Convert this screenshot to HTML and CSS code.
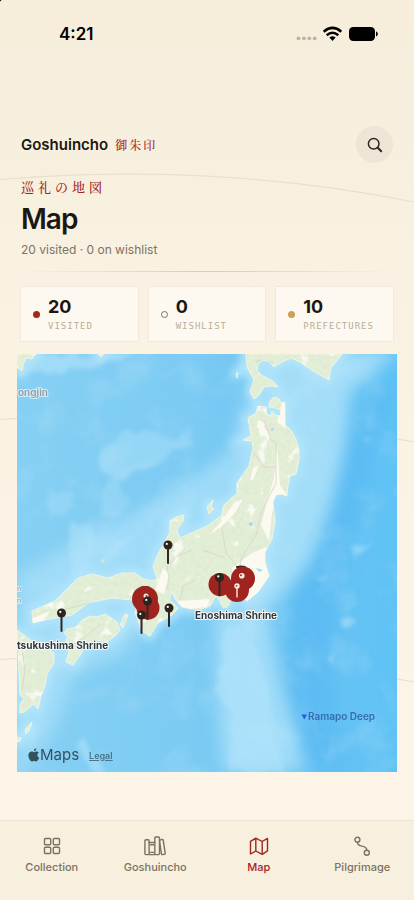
FILE: index.html
```html
<!DOCTYPE html>
<html lang="en">
<head>
<meta charset="utf-8">
<meta name="viewport" content="width=device-width, initial-scale=1">
<title>Goshuincho Map</title>
<link rel="stylesheet" href="styles.css">
</head>
<body>
<div class="app">
  <svg class="waves" viewBox="0 0 414 900" preserveAspectRatio="none" aria-hidden="true">
    <g fill="none" stroke="#e9dfca" stroke-width="1.2">
      <path id="wave" d="M0 179.500C130 169 270 173 414 202"/>
      <use href="#wave" y="240"/>
      <use href="#wave" y="480"/>
    </g>
    <path d="M0 0H1.500L0 1.500Z"/>
  </svg>

  <div class="status">
    <span class="time">4:21</span>
    <svg class="signals" width="82" height="16" viewBox="0 0 82 16" aria-hidden="true">
      <g fill="#bbb3a4"><circle cx="2.500" cy="12.300" r="1.900"/><circle cx="7.900" cy="12.300" r="1.900"/><circle cx="13.300" cy="12.300" r="1.900"/><circle cx="18.700" cy="12.300" r="1.900"/></g>
      <g fill="none" stroke="#000" stroke-width="2.500"><path d="M27.700 5.700Q36.500-1.900 45.300 5.700"/><path d="M30.700 9.200Q36.500 4.300 42.300 9.200"/></g>
      <path d="M33.400 11.500Q36.500 9 39.600 11.500L36.500 15Z"/>
      <rect x="53" y="1" width="26" height="14" rx="4.200"/><path d="M80 5.600c2.400.5 2.400 4.300 0 4.800Z"/>
    </svg>
  </div>

  <header class="topbar">
    <div class="brand"><span class="brand-name">Goshuincho</span><span class="brand-jp" lang="ja">御朱印</span></div>
    <button class="search" type="button" aria-label="Search">
      <svg width="16" height="16" viewBox="0 0 16 16" fill="none" stroke="#2f2720" stroke-linecap="round"><circle cx="6.700" cy="6.700" r="5.300" stroke-width="1.500"/><path d="M10.800 10.800L14.200 14.200" stroke-width="2"/></svg>
    </button>
  </header>

  <main>
    <section class="intro">
      <p class="eyebrow" lang="ja">巡礼の地図</p>
      <h1>Map</h1>
      <p class="summary">20 visited · 0 on wishlist</p>
      <div class="rule"></div>
      <ul class="stats">
        <li><i class="dot visited"></i><div><strong>20</strong><span>VISITED</span></div></li>
        <li><i class="dot wishlist"></i><div><strong>0</strong><span>WISHLIST</span></div></li>
        <li><i class="dot prefectures"></i><div><strong>10</strong><span>PREFECTURES</span></div></li>
      </ul>
    </section>

    <section class="map" aria-label="Shrine map">
      <svg class="map-art" viewBox="17 354 380 418" preserveAspectRatio="xMidYMid slice">
        <defs>
          <linearGradient id="sea" x1="0" x2="1" y1="0" y2="0"><stop offset="0" stop-color="#86d0f4"/><stop offset=".45" stop-color="#7ccbf3"/><stop offset=".75" stop-color="#6ac3f3"/><stop offset="1" stop-color="#5fc2f5"/></linearGradient>
          <filter id="b3" x="-30%" y="-30%" width="160%" height="160%"><feGaussianBlur stdDeviation="4"/></filter>
          <filter id="b8" x="-40%" y="-40%" width="180%" height="180%"><feGaussianBlur stdDeviation="8"/></filter>
          <filter id="rough" x="-20%" y="-20%" width="140%" height="140%"><feTurbulence type="fractalNoise" baseFrequency=".06" numOctaves="3" seed="4"/><feDisplacementMap in="SourceGraphic" scale="16" xChannelSelector="R" yChannelSelector="G"/><feGaussianBlur stdDeviation="2"/></filter>
          <filter id="current" x="0" y="0" width="100%" height="100%"><feTurbulence type="fractalNoise" baseFrequency=".025" numOctaves="4" seed="12"/><feColorMatrix values="0 0 0 0 .72  0 0 0 0 .9  0 0 0 0 .99  3 0 0 0 -1.500"/></filter>
          <filter id="patch" x="0" y="0" width="100%" height="100%"><feTurbulence type="fractalNoise" baseFrequency=".07" numOctaves="3" seed="9"/><feColorMatrix values="0 0 0 0 .99  0 0 0 0 .98  0 0 0 0 .94  8 0 0 0 -5.200"/></filter>
          <filter id="relief" x="0" y="0" width="100%" height="100%"><feTurbulence type="fractalNoise" baseFrequency=".22" numOctaves="2" seed="2"/><feColorMatrix values="0 0 0 0 .6  0 0 0 0 .72  0 0 0 0 .55  1.200 0 0 0 -.45"/></filter>
          <path id="land" d="M258 406l8 1 1 8 4 0 1-4 3 4 5 1 1-6-5-2-7-1 1-6 4-4 5 2 2 4 4-1 0 11 0 12 6 5 5 9 3 11 0 9-3 15-6 2-3 16 0 4-5-2-6 1-3 7 2 20-3 17-7 13 0 10 4 14-11 16-11 9-3-3 2-4-7-2-8 6-2 7-3 3-4-4-6-8-6 10-8 3-11 0-9-2-7-8-4-8-1 9 8 8-6 7-14 8-8 13-8-5-7-18 3-10-5-3-21-2-24 5-16 12-27 5-12 3-1-12 23-10 23-23 14-4 16 4 14-5 13 0 8 6 9 2 5-2-4-13 6-14 5-8 6-12 0-11 6-4 8-2-1 6-6 9 3 8 7-3 20-9 14-10 3-11 13-12 0-10 12-17 4-18-1-7-9-1 8-4-3-18 8-5z
            M246 354l1 13 7 13-4 12 4 7 5-4 5-8 7-1 7 1-4-5-7-4-6-3-4-5 1-6 5-4 5 1 6 6 8-5 9-4 9 4 11 8 18 10 2-12 11-14z
            M82 620l8-4 7 1 8-3 12 8 3 8-4 5-9 7-10-2-10 5-7 10-7 10-7-3 3-10-4-9 3-6-4-4 3-4 9-2z
            M17 630l8 6 8 6 9 2-2 7 7-2 7 4 0 10-7 11-2 12-4 10-3 13-4-5-10 8-4 1 0-9 4-5-4-4z
            M207 507l6-7-2 7 3 2-5 5zM120 625l5-11 3 1-5 13zM17 354h19l-4 5-6-1-3 7-1 6-5-4zM98 354h6l-3 3zM25 730l7-8-3 9-3 3zM17 737l4 1-1 3-3 1zM236 374l2-2-1 6z"/>
          <clipPath id="landclip"><use href="#land"/></clipPath>
          <g id="pin"><path d="M0 3V18" stroke="#2e2924" stroke-width="2" stroke-linecap="round"/><circle r="4.500" fill="#2c241d"/><circle cx="-1.200" cy="-1.100" r="1.100" fill="#fff"/></g>
          <g id="wpin"><path d="M0 2V11" stroke="#f1dfca" stroke-width="1.500" stroke-linecap="round"/><circle r="2.700" fill="#faf0e2"/><circle cx="-.4" cy="-.2" r=".9" fill="#a3261f"/></g>
        </defs>
        <rect x="17" y="354" width="380" height="418" fill="url(#sea)"/>
        <path d="M397 375L362 415 345 450 338 475 326 545 290 600 284 680 315 772H345L330 660 350 540 375 450Z" fill="#58baf3" filter="url(#b8)" opacity=".7"/>
        <g fill="#aadff8" filter="url(#rough)">
          <path d="M17 354H150Q80 372 17 376Z" opacity=".75"/>
          <path d="M102 445Q120 430 150 431 178 434 180 445 160 466 140 472 118 482 100 472Z" opacity=".5"/>
          <path d="M108 476L150 458 160 463 120 482 132 502 118 520 98 514Z" opacity=".4"/>
          <path d="M45 488L70 490 74 510 50 520Z" opacity=".4"/>
          <path d="M176 434L192 428 192 446 178 450Z" opacity=".4"/>
        </g>
        <g filter="url(#b8)" fill="#a8dff9">
          <path d="M240 350H400L350 392 344 450 332 500 310 560 275 605 235 620 255 520 285 480 275 390Z" opacity=".92"/>
          <path d="M17 575L80 540 155 502 190 480 230 450 245 390 260 420 230 520 170 590 130 640 125 655 75 675 55 730 17 780Z" opacity=".8"/>
          <path d="M214 610H267L281 680 305 772H222L216 700Z" opacity=".85"/>
        </g>
        <rect x="17" y="354" width="380" height="418" filter="url(#current)" opacity=".17"/>
        <g fill="#b2e3fa" filter="url(#rough)" opacity=".55">
          <path d="M225 625L252 615 265 670 285 772H226L231 715 217 690Z"/>
          <path d="M70 525l20-5 4 40-22 25zM105 550l30-14-4 10-30 15zM80 735l12 15 14 22H96L75 748z"/>
          <path d="M354 548l16-8-4 10-12 7zM342 620l7-4 3 5-6 4zM332 657l6-6-2 10-5 1zM315 580l8-9-2 8zM361 440l9-5-3 7z"/>
        </g>
        <use href="#land" fill="none" stroke="#b3e5fb" stroke-width="10" filter="url(#b3)"/>
        <use href="#land" fill="#e4efd7" stroke="#f8f7e6" stroke-width=".8" stroke-linejoin="round"/>
        <g clip-path="url(#landclip)">
          <rect x="17" y="354" width="340" height="390" filter="url(#relief)" opacity=".45"/>
          <rect x="17" y="354" width="340" height="390" filter="url(#patch)" opacity=".8"/>
          <g fill="#fcfaf0">
            <path d="M284 399l2 29-9-6 4-16zM258 420l7 3-2 10-6-6zM277 445l3 40 8 12-12 1-4 15-3 28-8-16 7-27 6-20zM220 523l15-21 8-3-8 14-14 14-12 8zM232 568l20-15 14-6 5 35-24 20-14-8zM250 480l3-12 6-3-6 15z"/>
            <path d="M207 607l-30 3 1-9 32-2zM155 590l8-22 6 6-5 20zM67 622l20-13 45-6v5l-48 4zM28 620l22-9-8 12-13 6z"/>
          </g>
          <g fill="none" stroke="#ddd5cc" stroke-width=".9">
            <path d="M264 420l7 20 5 3v40l-15 30-5 22-15 24-2 14M252 450l12 17h12M222 528l4 25 13 16M203 550l22 8M167 590l2-12-2-12 10-10 15-6M57 612l35-10 34 4 13-13M100 625l-15 12-12 8M260 372l-3-12 17 3M22 650l3 20-3 20M180 600l3-14 12-5"/>
          </g>
          <path d="M249 522l4 1-1 3-3-1zM271 429l2-1 1 2-3 1zM146 590l4-4 2 5zM256 568l7 2-4 2z" fill="#9bdaf7"/>
        </g>
        <path d="M220 603l5-2 2 5-4 3z" fill="#e4efd7"/>
        <circle cx="102.500" cy="561" r="1.800" fill="#d5e9c5"/>

        <g fill="#242729"><ellipse cx="241" cy="567" rx="5" ry="1.500"/><ellipse cx="145" cy="588" rx="5" ry="2"/></g>
        <g fill="#9f241f"><circle cx="145" cy="599" r="13"/><circle cx="148" cy="608" r="11.500"/><circle cx="220" cy="584.500" r="11.500"/><circle cx="243" cy="578.500" r="12"/><circle cx="237" cy="590" r="12"/></g>
        <use href="#pin" x="168" y="545"/><use href="#pin" x="61.500" y="613"/><use href="#pin" x="169" y="608"/>
        <circle cx="146" cy="596" r="2.500" fill="#faf0e2"/><circle cx="146.500" cy="596" r=".9" fill="#9f241f"/>
        <use href="#pin" x="147.500" y="601"/><use href="#pin" x="141.500" y="615"/><use href="#pin" x="219.500" y="577.500"/>
        <circle cx="241.800" cy="575.700" r="2.800" fill="#faf0e2"/><circle cx="241" cy="575.300" r="1" fill="#9f241f"/><use href="#wpin" x="237" y="586"/>
        <g class="place">
          <text x="195" y="619">Enoshima Shrine</text>
          <text x="17" y="649">tsukushima Shrine</text>
          <text x="18" y="396" class="faint">ongjin</text>
          <text x="17" y="591" class="side">n</text>
          <text x="17" y="603" class="side">n</text>
          <text x="308" y="720" class="deep">Ramapo Deep</text>
        </g>
        <path d="M301.500 714.500h5.500l-2.700 5z" fill="#245fdc"/>
      </svg>
      <div class="attribution">
        <span class="maker"><svg width="12" height="14" viewBox="0 0 12 14" aria-hidden="true"><path fill="#34515f" d="M8.300.2C8.400 1.700 7.200 3.200 5.800 3.200 5.700 1.800 6.900.4 8.300.2ZM10.800 4.800C8.700 6 9 8.700 11.200 9.700 10.600 11.500 9.400 13.400 8.200 13.400 7.400 13.400 7 12.900 6.100 12.900 5.100 12.900 4.700 13.400 3.900 13.400 2.300 13.400.4 10.200.4 7.500.4 4.900 2 3.600 3.600 3.600 4.600 3.600 5.400 4.200 6 4.200 6.600 4.200 7.500 3.500 8.700 3.500 9.600 3.500 10.300 4 10.800 4.800Z"/></svg>Maps</span>
        <a href="#legal">Legal</a>
      </div>
    </section>
  </main>

  <nav class="tabs" aria-label="Main">
    <a href="#collection"><svg width="22" height="22" viewBox="0 0 22 22"><rect x="3.500" y="3.500" width="6.200" height="6.200" rx="1"/><rect x="12.300" y="3.500" width="6.200" height="6.200" rx="1"/><rect x="3.500" y="12.300" width="6.200" height="6.200" rx="1"/><rect x="12.300" y="12.300" width="6.200" height="6.200" rx="1"/></svg>Collection</a>
    <a href="#goshuincho"><svg width="22" height="22" viewBox="0 0 22 22"><rect x=".9" y="4.700" width="4.200" height="14.900" rx="1"/><path d="M5.100 7.500h5.700M5.100 19.600h5.700M6.500 9.700h3M6.500 17.400h3"/><rect x="10.800" y="2" width="4.700" height="17.600" rx="1"/><path d="M15.700 5.100l2.600-.7q.8-.1.900.7l2 13.200q.1.700-.7.900l-2.200.4q-.8.100-.9-.7l-1.900-13"/></svg>Goshuincho</a>
    <a class="active" href="#map" aria-current="page"><svg width="22" height="22" viewBox="0 0 22 22"><path d="M2.500 6.300L7.800 3.200 14.200 6.500 19.500 3.400V15.800L14.200 19.300 7.800 16 2.500 19ZM7.800 3.200V16M14.200 6.500V19.300"/></svg>Map</a>
    <a href="#pilgrimage"><svg width="22" height="22" viewBox="0 0 22 22"><circle cx="6.400" cy="4.800" r="2.500"/><circle cx="15.800" cy="17.800" r="2.500"/><path d="M6.400 7.300C6.400 13.500 15.800 8.800 15.800 15.300"/></svg>Pilgrimage</a>
  </nav>
</div>
</body>
</html>
```
FILE: styles.css
```css
* {
  box-sizing: border-box;
}

body {
  margin: 0;
  font-family: Inter, "Noto Sans CJK JP", sans-serif;
  color: #1b1713;
  background: #faf3e5;
}

h1, p, ul {
  margin: 0;
  padding: 0;
}

.app {
  position: relative;
  isolation: isolate;
  min-height: 100vh;
  display: flex;
  flex-direction: column;
  background: linear-gradient(#f6eedb, #f9f1e1 30%, #fcf4e7 80%);
}

.waves {
  position: absolute;
  inset: 0;
  z-index: -1;
  width: 100%;
  height: 100%;
}

.status {
  display: flex;
  justify-content: space-between;
  align-items: center;
  padding: 24px 36px 0 59px;
  color: #000;
}

.time {
  font-size: 17px;
  line-height: 20px;
  font-weight: 600;
}

.topbar {
  display: flex;
  justify-content: space-between;
  align-items: center;
  padding: 82px 21px 0;
}

.brand {
  display: flex;
  align-items: center;
  gap: 7px;
}

.brand-name {
  font-size: 15px;
  line-height: 20px;
  font-weight: 600;
}

.brand-jp,
.eyebrow {
  font-family: "Noto Serif CJK JP", "Noto Sans CJK JP", serif;
  font-weight: 500;
  color: #a3261f;
}

.brand-jp {
  font-size: 12px;
  line-height: 20px;
  letter-spacing: 2px;
}

.search {
  display: grid;
  place-items: center;
  width: 37px;
  height: 37px;
  padding: 0;
  border: 0;
  border-radius: 50%;
  background: #ede6d7;
}

.intro {
  padding: 14px 20px 12px;
}

.eyebrow {
  padding-left: 1px;
  font-size: 13px;
  line-height: 20px;
  letter-spacing: 4px;
}

h1 {
  padding-left: 1px;
  font-size: 28px;
  line-height: 36px;
  margin-top: 4px;
  font-weight: 600;
  letter-spacing: -1px;
}

.summary {
  padding-left: 1px;
  margin-top: 4px;
  font-size: 12px;
  line-height: 18px;
  color: #7d7262;
}

.rule {
  height: 1px;
  margin: 12px 0 14px;
  background: linear-gradient(90deg, transparent, #decda1 50%, transparent);
}

.stats {
  display: grid;
  grid-template-columns: repeat(3, 1fr);
  gap: 9px;
  list-style: none;
}

.stats li {
  display: flex;
  align-items: center;
  gap: 8px;
  height: 56px;
  padding-left: 12px;
  border: 1px solid #f0eadc;
  background: #fdf9f0;
}

.stats strong,
.stats span {
  display: block;
}

.stats strong {
  font-size: 18px;
  line-height: 22px;
  font-weight: 700;
}

.stats span {
  margin-top: 2px;
  font-family: "DejaVu Sans Mono", "Liberation Mono", monospace;
  font-size: 9px;
  line-height: 12px;
  letter-spacing: 1px;
  color: #b9ad9a;
}

.dot {
  flex: none;
  width: 7px;
  height: 7px;
  border-radius: 50%;
}

.visited {
  background: #a3261f;
}

.wishlist {
  border: 1px solid #7d7262;
}

.prefectures {
  background: #caa253;
}

.map {
  position: relative;
  margin: 0 17px;
}

.map-art {
  display: block;
  width: 100%;
  aspect-ratio: 380 / 418;
}

.place {
  font-size: 10px;
  font-weight: 700;
  fill: #34373a;
  stroke: #f5fafa;
  stroke-width: 2px;
  stroke-linejoin: round;
  paint-order: stroke;
}

.place .faint {
  fill: #929ba5;
  stroke: #d2edf9;
  font-weight: 600;
}

.place .side {
  font-size: 7px;
  font-weight: 400;
  fill: #8995a5;
  stroke: #d2edf9;
}

.place .deep {
  font-weight: 600;
  fill: #356daf;
  stroke: none;
}

.attribution {
  position: absolute;
  left: 11px;
  bottom: 7px;
  display: flex;
  align-items: center;
  gap: 10px;
  color: #34515f;
}

.maker {
  display: flex;
  align-items: center;
  font-size: 15px;
  line-height: 20px;
}

.attribution a {
  color: #47758c;
  font-size: 9px;
  font-weight: 600;
}

.tabs {
  display: grid;
  grid-template-columns: repeat(4, 1fr);
  height: 80px;
  margin-top: auto;
  padding-top: 14px;
  border-top: 1px solid #ece4d4;
  background: #f7f0de;
}

.tabs a {
  display: flex;
  flex-direction: column;
  align-items: center;
  gap: 2px;
  font-size: 11px;
  line-height: 16px;
  font-weight: 500;
  text-decoration: none;
  color: #7d7262;
}

.tabs svg {
  fill: none;
  stroke: currentColor;
  stroke-width: 1.4px;
  stroke-linejoin: round;
  stroke-linecap: round;
}

.tabs .active {
  color: #a3261f;
}
```
